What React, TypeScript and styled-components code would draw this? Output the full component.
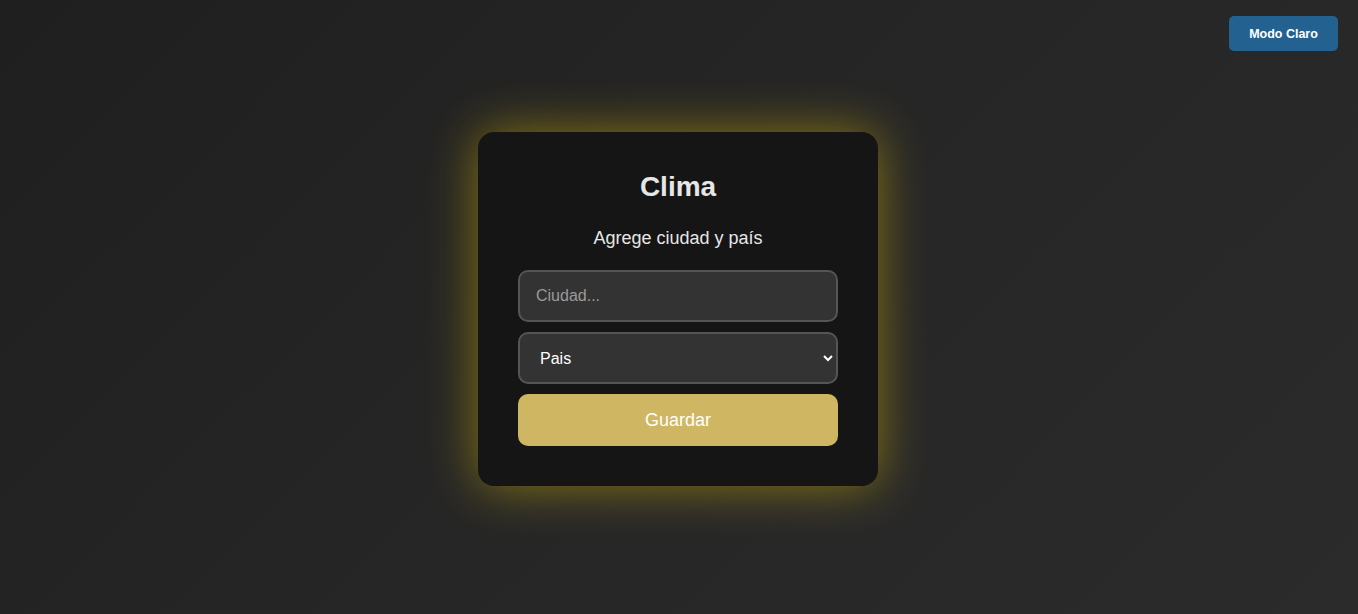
import React from "react";
import styled, { createGlobalStyle } from "styled-components";

const Global = createGlobalStyle`
  * { box-sizing: border-box; }
  html, body { margin: 0; padding: 0; height: 100%; }
  body {
    font-family: "Liberation Sans", Arial, sans-serif;
    background: linear-gradient(135deg, #1f1f1f 0%, #262626 50%, #2b2b2b 100%);
    background-attachment: fixed;
    color: #e6e6e6;
  }
  #root { min-height: 100vh; }
`;

const Page = styled.main`
  min-height: 100vh;
  padding: 4px 2px 0 0;
  display: flex;
  align-items: center;
  justify-content: center;
`;

const ThemeToggle = styled.button`
  position: fixed;
  top: 16px;
  right: 20px;
  width: 109px;
  height: 35px;
  border: none;
  border-radius: 5px;
  background: #236290;
  color: #ffffff;
  font-family: "Liberation Sans", Arial, sans-serif;
  font-weight: bold;
  font-size: 12.5px;
  cursor: pointer;
`;

const Card = styled.section`
  width: 400px;
  padding: 40px;
  background: #151515;
  border-radius: 16px;
  box-shadow: 0 0 50px rgba(255, 215, 0, 0.45);
  display: flex;
  flex-direction: column;
  align-items: stretch;
`;

const Title = styled.h2`
  margin: 0;
  text-align: center;
  font-size: 28px;
  line-height: 30px;
  font-weight: bold;
  color: #e6e6e6;
`;

const Subtitle = styled.p`
  margin: 26px 0 21px;
  text-align: center;
  font-size: 18px;
  line-height: 21px;
  color: #e6e6e6;
`;

const Form = styled.form`
  display: flex;
  flex-direction: column;
  gap: 10px;
`;

const fieldBase = `
  width: 100%;
  height: 52px;
  padding: 0 16px;
  border: 2px solid #555555;
  border-radius: 10px;
  background: #333333;
  color: #ffffff;
  font-family: "Liberation Sans", Arial, sans-serif;
  font-size: 16px;
  outline: none;
`;

const TextInput = styled.input`
  ${fieldBase}
  &::placeholder { color: #9a9a9a; }
`;

const Select = styled.select`
  ${fieldBase}
  padding: 0 2px 0 16px;
`;

const SubmitButton = styled.button`
  height: 52px;
  border: none;
  border-radius: 10px;
  background: #cfb662;
  color: #ffffff;
  font-family: "Liberation Sans", Arial, sans-serif;
  font-size: 18px;
  cursor: pointer;
`;

export default function App() {
  return (
    <>
      <Global />
      <ThemeToggle>Modo Claro</ThemeToggle>
      <Page>
        <Card>
          <Title>Clima</Title>
          <Subtitle>Agrege ciudad y país</Subtitle>
          <Form onSubmit={(e) => e.preventDefault()}>
            <TextInput type="text" placeholder="Ciudad..." />
            <Select defaultValue="">
              <option value="">Pais</option>
              <option value="AR">Argentina</option>
              <option value="MX">México</option>
              <option value="ES">España</option>
            </Select>
            <SubmitButton type="submit">Guardar</SubmitButton>
          </Form>
        </Card>
      </Page>
    </>
  );
}
